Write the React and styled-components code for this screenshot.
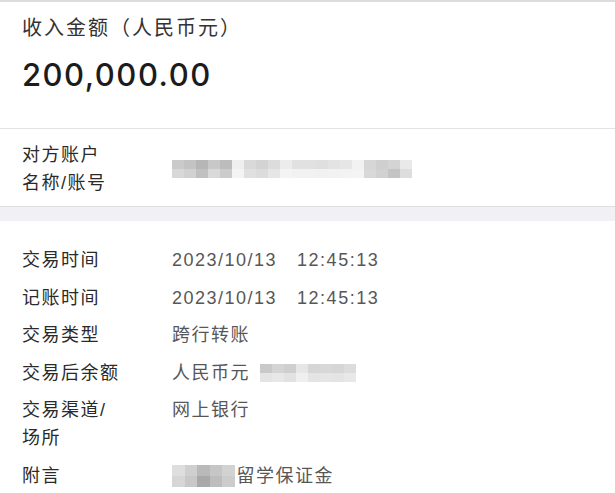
import * as React from 'react'
import styled, { createGlobalStyle } from 'styled-components'

const GlobalStyle = createGlobalStyle`
  body {
    margin: 0;
    background: #fff;
  }
`

const FONT = `"Liberation Sans", "Noto Sans CJK SC", sans-serif`

const counterpartyCells = [
  ['#cacaca', '#c3c3c3', '#b6b6b6', '#c8c8c8', '#bcbcbc', '#efefef', '#d9d9d9', '#d3d3d3', '#dcdcdc', '#ececec',
    '#e1e1e1', '#e1e1e1', '#dfdfdf', '#e3e3e3', '#e6e6e6', '#f2f2f2', '#d6d6d6', '#cfcfcf', '#d4d4d4', '#e9e9e9'],
  ['#d8d8d8', '#d1d1d1', '#c0c0c0', '#d9d9d9', '#cbcbcb', '#f4f4f4', '#e0e0e0', '#dcdcdc', '#e6e6e6', '#f4f4f4',
    '#f2f2f2', '#f2f2f2', '#f1f1f1', '#f2f2f2', '#f3f3f3', '#f4f4f4', '#d8d8d8', '#d1d1d1', '#c4c4c4', '#dddddd'],
]

const balanceCells = [
  ['#c9c9c9', '#d4d4d4', '#cfcfcf', '#e6e6e6', '#d6d6d6', '#d8d8d8', '#d6d6d6', '#dcdcdc'],
  ['#e4e4e4', '#e8e8e8', '#e2e2e2', '#efefef', '#e4e4e4', '#e6e6e6', '#e4e4e4', '#e8e8e8'],
]

const remarkCells = [
  ['#dedede', '#cfcfcf', '#b9b9b9', '#c6c6c6', '#d2d2d2'],
  ['#d6d6d6', '#c8c8c8', '#a9a9a9', '#bdbdbd', '#cccccc'],
]

const details = [
  { label: '交易时间', date: '2023/10/13', time: '12:45:13' },
  { label: '记账时间', date: '2023/10/13', time: '12:45:13' },
  { label: '交易类型', text: '跨行转账' },
  { label: '交易后余额', text: '人民币元', mosaic: balanceCells },
  { label: ['交易渠道/', '场所'], text: '网上银行' },
  { label: '附言', mosaic: remarkCells, after: '留学保证金', remark: true },
]

const Mosaic = ({ rows, $w, $h }) => (
  <MosaicGrid $cols={rows[0].length} $w={$w} $h={$h}>
    {rows.flat().map((shade, i) => (
      <Cell key={i} style={{ background: shade }} />
    ))}
  </MosaicGrid>
)

export default function App () {
  return (
    <Page>
      <GlobalStyle />
      <AmountSection>
        <Title>收入金额（人民币元）</Title>
        <Amount>200,000.00</Amount>
      </AmountSection>

      <CounterpartySection>
        <Label>
          <div>对方账户</div>
          <div>名称/账号</div>
        </Label>
        <Mosaic rows={counterpartyCells} $w={12} $h={9} />
      </CounterpartySection>

      <Band />

      <DetailList>
        {details.map((d, i) => (
          <Row key={i}>
            <Label>
              {Array.isArray(d.label)
                ? d.label.map(l => <div key={l}>{l}</div>)
                : d.label}
            </Label>
            <Value>
              {d.date && (
                <>
                  {d.date}
                  <Time>{d.time}</Time>
                </>
              )}
              {d.text}
              {d.mosaic && (
                <MosaicSlot $remark={d.remark}>
                  <Mosaic
                    rows={d.mosaic}
                    $w={d.remark ? 12.5 : 12}
                    $h={d.remark ? 11 : 9}
                  />
                </MosaicSlot>
              )}
              {d.after}
            </Value>
          </Row>
        ))}
      </DetailList>
    </Page>
  )
}

const Page = styled.div`
  width: 615px;
  min-height: 493px;
  border-top: 2px solid #dcdcdc;
  font-family: ${FONT};
  color: #2e2e2e;
  box-sizing: border-box;
`

const AmountSection = styled.section`
  padding: 12px 22px 33px;
  border-bottom: 1px solid #e3e3e3;
`

const Title = styled.div`
  font-size: 20px;
  line-height: 28px;
  letter-spacing: 2px;
  color: #333;
`

const Amount = styled.div`
  margin-top: 13px;
  font-family: Inter, "Liberation Sans", sans-serif;
  font-weight: 500;
  font-size: 31px;
  line-height: 40px;
  letter-spacing: 1.5px;
  color: #1c1c1c;
`

const CounterpartySection = styled.section`
  display: flex;
  align-items: center;
  padding: 12px 22px 9px;
  border-bottom: 1px solid #dedede;
`

const Band = styled.div`
  height: 14px;
  background: #f1f1f5;
`

const DetailList = styled.section`
  display: flex;
  flex-direction: column;
  gap: 9.5px;
  padding: 25px 22px 0;
`

const Row = styled.div`
  display: flex;
  align-items: flex-start;
`

const Label = styled.div`
  flex: 0 0 150px;
  font-size: 18px;
  line-height: 28px;
  letter-spacing: 1.5px;
  color: #2a2a2a;
`

const Value = styled.div`
  display: flex;
  align-items: center;
  font-size: 18px;
  line-height: 28px;
  letter-spacing: 1.5px;
  color: #575757;
`

const Time = styled.span`
  margin-left: 20px;
`

const MosaicSlot = styled.span`
  display: inline-flex;
  margin-left: ${p => (p.$remark ? '0' : '10px')};
  margin-right: ${p => (p.$remark ? '2px' : '0')};
`

const MosaicGrid = styled.div`
  display: grid;
  grid-template-columns: repeat(${p => p.$cols}, ${p => p.$w}px);
  grid-auto-rows: ${p => p.$h}px;
  filter: blur(0.6px);
`

const Cell = styled.span`
  display: block;
`
